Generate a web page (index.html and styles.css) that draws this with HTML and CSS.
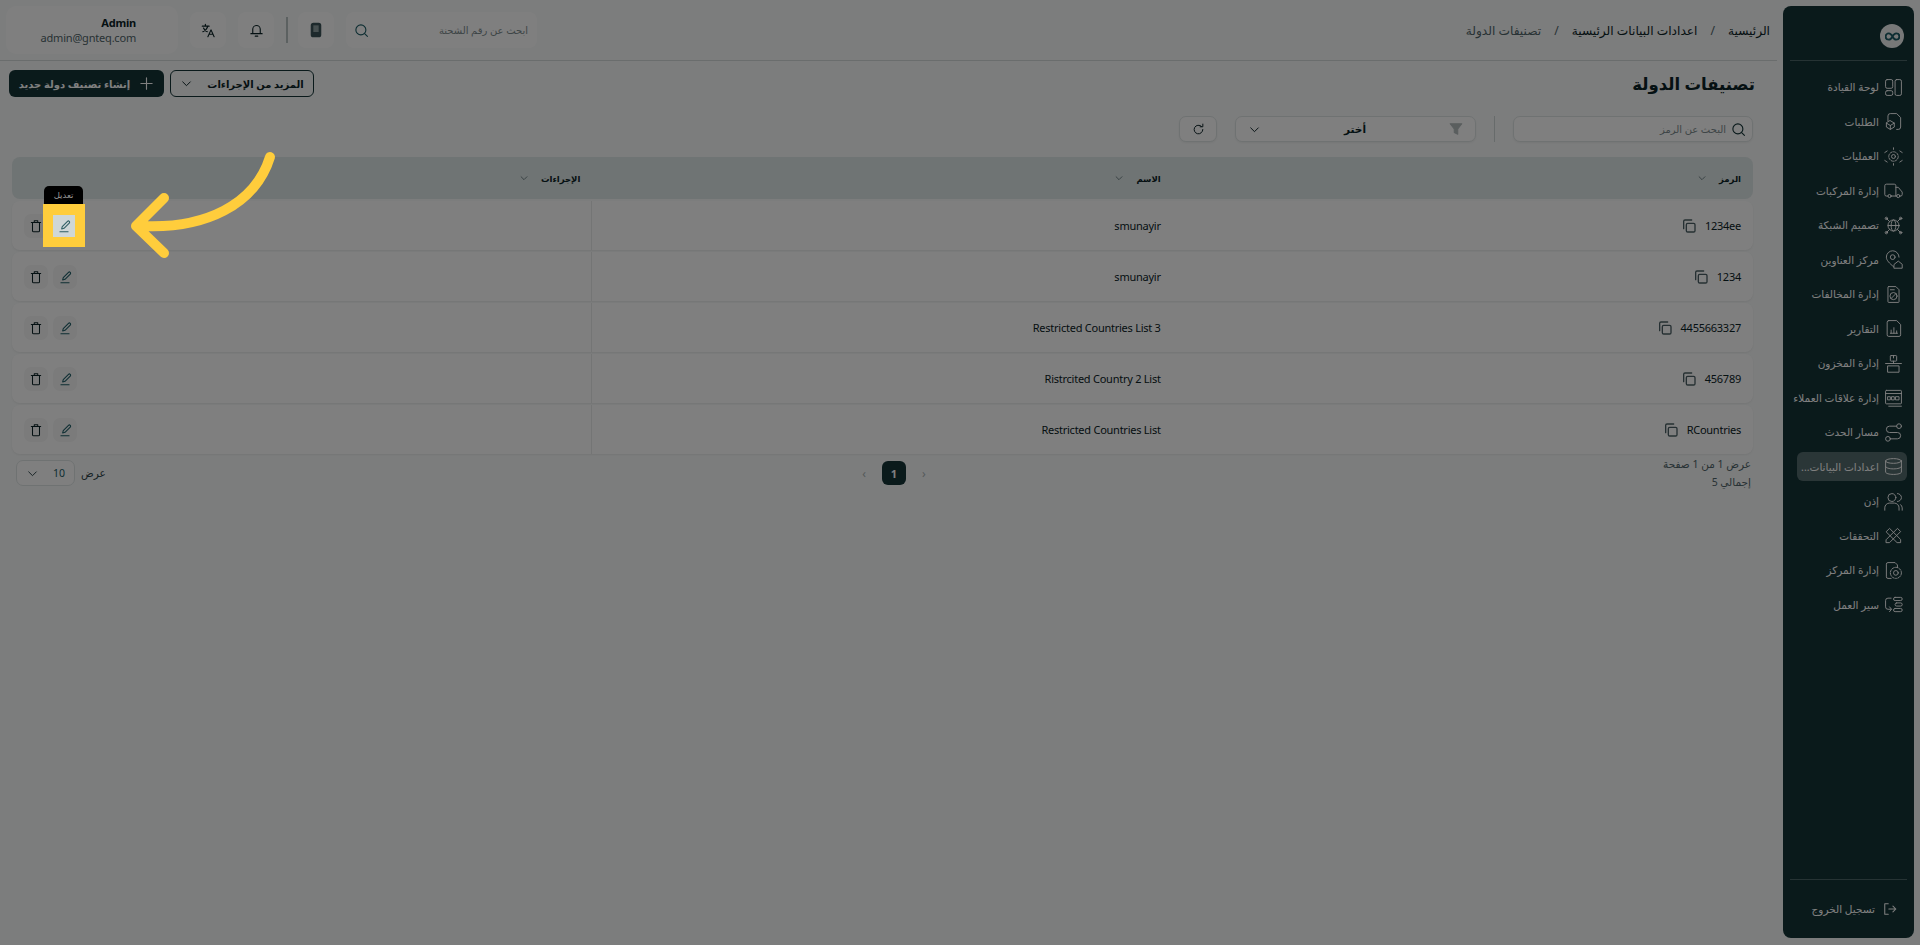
FILE: index.html
```html
<!DOCTYPE html>
<html lang="ar" dir="rtl">
<head>
  <meta charset="UTF-8">
  <meta name="viewport" content="width=device-width, initial-scale=1.0">
  <title>تصنيفات الدولة</title>
  <link rel="stylesheet" href="styles.css">
</head>
<body>
  <svg class="sprite" xmlns="http://www.w3.org/2000/svg">
    <symbol id="i-search" viewBox="0 0 24 24"><circle cx="11" cy="11" r="8"/><path d="M17 17l4.500 4.500"/></symbol>
    <symbol id="i-copy" viewBox="0 0 24 24"><rect x="8" y="8" width="13" height="13" rx="2"/><path d="M4 16V5a2 2 0 0 1 2-2h10"/></symbol>
    <symbol id="i-chev" viewBox="0 0 24 24"><path d="M5 9l7 7 7-7"/></symbol>
    <symbol id="i-edit" viewBox="0 0 24 24"><path d="M8 17l1-4 9-9a2.100 2.100 0 0 1 3 3l-9 9z"/><path d="M5 22h14"/></symbol>
    <symbol id="i-trash" viewBox="0 0 24 24"><path d="M4 6h16M9 6V3h6v3M6 6v14a2 2 0 0 0 2 2h8a2 2 0 0 0 2-2V6"/></symbol>
  </svg>

  <div class="shell">
    <aside class="sidebar">
      <div class="logo-row">
        <div class="logo">
          <svg viewBox="0 0 24 14" width="15" height="9"><path d="M12 7C10 3 8 2 6 2a5 5 0 0 0 0 10c2 0 4-1 6-5s4-5 6-5a5 5 0 0 1 0 10c-2 0-4-1-6-5z"/></svg>
        </div>
      </div>
      <nav class="side-nav">
        <a class="side-link" href="#"><svg viewBox="0 0 24 24"><rect x="2" y="2" width="9" height="11" rx="2"/><rect x="2" y="16" width="9" height="6" rx="2"/><rect x="14" y="2" width="8" height="20" rx="2"/></svg><span>لوحة القيادة</span></a>
        <a class="side-link" href="#"><svg viewBox="0 0 24 24"><path d="M5 11V5a3 3 0 0 1 3-3h8l5 5v12a3 3 0 0 1-3 3h-2"/><path d="M8 11l5 3v5l-5 3-5-3v-5zM3 14l5 3 5-3M8 17v5"/></svg><span>الطلبات</span></a>
        <a class="side-link" href="#"><svg viewBox="0 0 24 24"><circle cx="12" cy="12" r="2.500"/><circle cx="12" cy="12" r="6" stroke-dasharray="3 1.500"/><path d="M1 7l3-2M23 7l-3-2M1 17l3 2M23 17l-3 2M12 1v2M12 21v2"/></svg><span>العمليات</span></a>
        <a class="side-link" href="#"><svg viewBox="0 0 24 24"><path d="M5 19H3a2 2 0 0 1-2-2V6a2 2 0 0 1 2-2h10a2 2 0 0 1 2 2v13H9M15 8h3l5 6v3a2 2 0 0 1-2 2h-1M15 19h1"/><circle cx="7" cy="19" r="2"/><circle cx="18" cy="19" r="2"/></svg><span>إدارة المركبات</span></a>
        <a class="side-link" href="#"><svg viewBox="0 0 24 24"><circle cx="12" cy="12" r="7"/><ellipse cx="12" cy="12" rx="3" ry="7"/><path d="M5 12h14M3 3l4 4M21 3l-4 4M3 21l4-4M21 21l-4-4"/><circle cx="3" cy="3" r="1.500"/><circle cx="21" cy="3" r="1.500"/><circle cx="3" cy="21" r="1.500"/><circle cx="21" cy="21" r="1.500"/></svg><span>تصميم الشبكة</span></a>
        <a class="side-link" href="#"><svg viewBox="0 0 24 24"><path d="M12 21C7 17 3 13 3 9a8 8 0 0 1 16 0"/><circle cx="11" cy="9" r="3"/><path d="M13 18l5-4 5 4v5H13z"/></svg><span>مركز العناوين</span></a>
        <a class="side-link" href="#"><svg viewBox="0 0 24 24"><path d="M6 2h9l4 4v15a1 1 0 0 1-1 1H6a1 1 0 0 1-1-1V3a1 1 0 0 1 1-1z"/><circle cx="12" cy="14" r="4.500"/><path d="M9 17l6-6M8 6h5"/></svg><span>إدارة المخالفات</span></a>
        <a class="side-link" href="#"><svg viewBox="0 0 24 24"><path d="M6 2h10l5 5v13a2 2 0 0 1-2 2H6a2 2 0 0 1-2-2V4a2 2 0 0 1 2-2z"/><path d="M8 18h9M9 18v-4M12.500 18v-7M16 18v-3"/></svg><span>التقارير</span></a>
        <a class="side-link" href="#"><svg viewBox="0 0 24 24"><rect x="8" y="2" width="8" height="7" rx="1"/><path d="M12 2v3M2 12h20M5 15h14v8H5zM12 9v3"/></svg><span>إدارة المخزون</span></a>
        <a class="side-link" href="#"><svg viewBox="0 0 24 24"><rect x="2" y="3" width="20" height="17" rx="1"/><path d="M2 7h20M6 23h16"/><path d="M5 11h3v4H5zM10 11h3v4h-3zM15 11h4v4h-4z"/></svg><span>إدارة علاقات العملاء</span></a>
        <a class="side-link" href="#"><svg viewBox="0 0 24 24"><circle cx="19" cy="4" r="3"/><circle cx="5" cy="20" r="3"/><path d="M16 4H7a4 4 0 0 0 0 8h10a4 4 0 0 1 0 8H8"/></svg><span>مسار الحدث</span></a>
        <a class="side-link active" href="#"><svg viewBox="0 0 24 24"><ellipse cx="12" cy="5" rx="10" ry="3"/><path d="M2 5v14c0 1.700 4.500 3 10 3s10-1.300 10-3V5M2 12c0 1.700 4.500 3 10 3s10-1.300 10-3"/></svg><span>اعدادات البيانات...</span></a>
        <a class="side-link" href="#"><svg viewBox="0 0 24 24"><circle cx="10" cy="7" r="5"/><path d="M1 23v-3a6 6 0 0 1 6-6h6a6 6 0 0 1 6 6v3M17 2a5 5 0 0 1 0 10M23 23v-3a6 6 0 0 0-2-4"/></svg><span>إذن</span></a>
        <a class="side-link" href="#"><svg viewBox="0 0 24 24"><path d="M3 17L17 3l4 4L7 21H3z"/><path d="M3 7l4-4 14 14v4h-4z"/></svg><span>التحققات</span></a>
        <a class="side-link" href="#"><svg viewBox="0 0 24 24"><path d="M9 22H5a2 2 0 0 1-2-2V4a2 2 0 0 1 2-2h9l3 3v3"/><circle cx="15" cy="15" r="3"/><circle cx="15" cy="15" r="7" stroke-dasharray="3 1.500"/></svg><span>إدارة المركز</span></a>
        <a class="side-link" href="#"><svg viewBox="0 0 24 24"><rect x="12" y="3" width="11" height="4" rx="2"/><rect x="14" y="10" width="9" height="4" rx="2"/><rect x="12" y="17" width="11" height="4" rx="2"/><path d="M9 4H5a3 3 0 0 0-3 3v8a3 3 0 0 0 3 3h4M7 15l2.500 3L7 21"/></svg><span>سير العمل</span></a>
      </nav>
      <a class="logout" href="#">
        <svg viewBox="0 0 24 24"><path d="M9 3H3v18h6M10 12h12M17 7l5 5-5 5"/></svg>
        <span>تسجيل الخروج</span>
      </a>
    </aside>

    <main class="main">
      <header class="topbar">
        <div class="crumbs">
          <a href="#">الرئيسية</a><span class="sep">/</span>
          <a href="#">اعدادات البيانات الرئيسية</a><span class="sep">/</span>
          <span class="current">تصنيفات الدولة</span>
        </div>
        <div class="top-tools">
          <div class="top-search">
            <span>ابحث عن رقم الشحنة</span>
            <svg class="ico teal"><use href="#i-search"/></svg>
          </div>
          <button class="tool-btn"><svg viewBox="0 0 24 24" class="ico phone"><rect x="5" y="2" width="14" height="20" rx="3"/><rect class="phone-screen" x="8" y="5" width="8" height="10"/></svg></button>
          <div class="tool-sep"></div>
          <button class="tool-btn"><svg viewBox="0 0 24 24" class="ico"><path d="M6 17V10a6 6 0 0 1 12 0v7M3 17h18M10 21h4"/></svg></button>
          <button class="tool-btn"><svg viewBox="0 0 24 24" class="ico"><path d="M2 5h11M7 2v3M11 5c-1 4-4 7-8 9M4 8c1 3 4 5 6 6M11 22l5-11 5 11M13 18h6"/></svg></button>
          <div class="user-box">
            <div class="user-name">Admin</div>
            <div class="user-mail">admin@gnteq.com</div>
          </div>
        </div>
      </header>

      <div class="title-row">
        <h1>تصنيفات الدولة</h1>
        <div class="title-actions">
          <button class="btn-outline"><span>المزيد من الإجراءات</span><svg class="ico small"><use href="#i-chev"/></svg></button>
          <button class="btn-primary"><svg viewBox="0 0 24 24" class="ico"><path d="M12 3v18M3 12h18"/></svg><span>إنشاء تصنيف دولة جديد</span></button>
        </div>
      </div>

      <div class="content">
        <div class="filters">
          <div class="filter-search">
            <svg class="ico"><use href="#i-search"/></svg>
            <span>البحث عن الرمز</span>
          </div>
          <div class="filter-sep"></div>
          <div class="filter-select">
            <svg viewBox="0 0 24 24" class="funnel"><path d="M2 3h20l-7 9v9l-6-3v-6z"/></svg>
            <span>أختر</span>
            <svg class="ico small"><use href="#i-chev"/></svg>
          </div>
          <button class="refresh"><svg viewBox="0 0 24 24" class="ico small"><path d="M20 12a8 8 0 1 1-2.500-5.800M20 2v5h-5"/></svg></button>
        </div>

        <div class="table">
          <div class="thead">
            <div class="th"><span>الرمز</span><svg class="mini"><use href="#i-chev"/></svg></div>
            <div class="th"><span>الاسم</span><svg class="mini"><use href="#i-chev"/></svg></div>
            <div class="th"><span>الإجراءات</span><svg class="mini"><use href="#i-chev"/></svg></div>
          </div>

          <div class="tr">
            <div class="td"><span>1234ee</span><svg class="copy"><use href="#i-copy"/></svg></div>
            <div class="td">smunayir</div>
            <div class="td td-actions">
              <button class="act"><svg class="act-ico"><use href="#i-edit"/></svg></button>
              <button class="act"><svg class="act-ico"><use href="#i-trash"/></svg></button>
            </div>
          </div>
          <div class="tr">
            <div class="td"><span>1234</span><svg class="copy"><use href="#i-copy"/></svg></div>
            <div class="td">smunayir</div>
            <div class="td td-actions">
              <button class="act"><svg class="act-ico"><use href="#i-edit"/></svg></button>
              <button class="act"><svg class="act-ico"><use href="#i-trash"/></svg></button>
            </div>
          </div>
          <div class="tr">
            <div class="td"><span>4455663327</span><svg class="copy"><use href="#i-copy"/></svg></div>
            <div class="td"><bdi>Restricted Countries List 3</bdi></div>
            <div class="td td-actions">
              <button class="act"><svg class="act-ico"><use href="#i-edit"/></svg></button>
              <button class="act"><svg class="act-ico"><use href="#i-trash"/></svg></button>
            </div>
          </div>
          <div class="tr">
            <div class="td"><span>456789</span><svg class="copy"><use href="#i-copy"/></svg></div>
            <div class="td"><bdi>Ristrcited Country 2 List</bdi></div>
            <div class="td td-actions">
              <button class="act"><svg class="act-ico"><use href="#i-edit"/></svg></button>
              <button class="act"><svg class="act-ico"><use href="#i-trash"/></svg></button>
            </div>
          </div>
          <div class="tr">
            <div class="td"><span>RCountries</span><svg class="copy"><use href="#i-copy"/></svg></div>
            <div class="td"><bdi>Restricted Countries List</bdi></div>
            <div class="td td-actions">
              <button class="act"><svg class="act-ico"><use href="#i-edit"/></svg></button>
              <button class="act"><svg class="act-ico"><use href="#i-trash"/></svg></button>
            </div>
          </div>
        </div>

        <div class="table-foot">
          <div class="page-info">
            <div>عرض 1 من 1 صفحة</div>
            <div>إجمالي 5</div>
          </div>
          <div class="pager">
            <span class="pager-arrow">&#x2039;</span>
            <span class="pager-num">1</span>
            <span class="pager-arrow">&#x203A;</span>
          </div>
          <div class="page-size">
            <span>عرض</span>
            <div class="size-select"><span class="size-val">10</span><svg class="ico small"><use href="#i-chev"/></svg></div>
          </div>
        </div>
      </div>
    </main>
  </div>

  <!-- guide layer: dims the page, then spotlights the edit button -->
  <div class="dim"></div>
  <div class="spot">
    <div class="spot-tip">تعديل</div>
    <div class="spot-box"><span class="spot-btn"><svg class="act-ico"><use href="#i-edit"/></svg></span></div>
  </div>
  <svg class="arrow" viewBox="0 0 300 300" width="300" height="300">
    <path d="M270 157C255 205 205 229 142 226M164 198l-28 28 28 27"/>
  </svg>
</body>
</html>
```

FILE: styles.css
```css
* {
  box-sizing: border-box;
}

html, body {
  height: 100%;
}

body {
  margin: 0;
  font-family: "Noto Sans", "DejaVu Sans", sans-serif;
  font-size: 12px;
  color: #0b2226;
  background: #f8fafa;
  overflow: hidden;
}

a {
  color: inherit;
  text-decoration: none;
}

button {
  font: inherit;
  color: inherit;
  cursor: pointer;
}

.sprite {
  display: none;
}

/* icons */
svg {
  fill: none;
  stroke: currentColor;
  stroke-width: 1.8;
  stroke-linecap: round;
  stroke-linejoin: round;
  flex: none;
}

.ico {
  width: 15px;
  height: 15px;
}

.ico.small {
  width: 13px;
  height: 13px;
}

.ico.teal {
  color: #1d5d66;
}

.ico.phone {
  width: 16px;
  height: 16px;
  color: #3a5358;
  fill: #3a5358;
}

.phone-screen {
  fill: #8fa0a2;
  stroke: none;
}

.mini {
  width: 10px;
  height: 10px;
  color: #51656a;
}

.copy {
  width: 16px;
  height: 16px;
  stroke-width: 2;
  color: #4d6166;
}

.act-ico {
  width: 14px;
  height: 14px;
}

/* layout */
.shell {
  display: flex;
  gap: 6px;
  height: 100%;
  padding: 6px 6px 7px 0;
}

.main {
  flex: 1;
  margin-top: -6px;
  min-width: 0;
}

/* sidebar */
.sidebar {
  width: 131px;
  display: flex;
  flex-direction: column;
  background: #143437;
  border-radius: 8px;
  color: #fff;
}

.logo-row {
  height: 55px;
  margin: 0 7px;
  padding: 18px 3px 0 0;
  border-bottom: 1px solid #4d6669;
}

.logo {
  width: 24px;
  height: 24px;
  border-radius: 50%;
  background: #eef1f1;
  display: flex;
  align-items: center;
  justify-content: center;
  color: #1d5d66;
}

.logo svg {
  stroke-width: 3;
}

.side-nav {
  display: flex;
  flex-direction: column;
  gap: 5.5px;
  padding: 11.500px 7px 0 14px;
}

.side-link {
  height: 29px;
  display: flex;
  align-items: center;
  gap: 5px;
  padding-right: 4px;
  border-radius: 6px;
  font-size: 10.5px;
  white-space: nowrap;
}

.side-link svg {
  width: 19px;
  height: 19px;
  stroke-width: 1.2;
}

.side-link.active {
  background: rgba(255, 255, 255, 0.28);
}

.logout {
  margin: auto 7px 0;
  height: 59px;
  display: flex;
  align-items: center;
  gap: 8px;
  padding-right: 10px;
  border-top: 1px solid #4d6669;
  font-size: 10.5px;
}

.logout svg {
  width: 14px;
  height: 14px;
}

/* top bar */
.topbar {
  height: 61px;
  display: flex;
  align-items: center;
  justify-content: space-between;
  padding: 0 7px 0 6px;
  border-bottom: 1px solid #d5dada;
}

.crumbs {
  display: flex;
  align-items: center;
  font-size: 12.2px;
}

.crumbs .sep {
  margin: 0 13px;
  color: #51656a;
}

.crumbs .current {
  color: #51656a;
}

.top-tools {
  display: flex;
  align-items: center;
  gap: 12px;
}

.top-search {
  width: 191px;
  height: 36px;
  display: flex;
  align-items: center;
  justify-content: space-between;
  padding: 0 9px 0 8px;
  background: #fff;
  border-radius: 8px;
  color: #7d8b8e;
  font-size: 10px;
}

.tool-btn {
  width: 36px;
  height: 36px;
  display: flex;
  align-items: center;
  justify-content: center;
  padding: 0;
  border: 0;
  border-radius: 8px;
  background: #fff;
}

.tool-sep {
  width: 2px;
  height: 26px;
  margin-right: -2px;
  background: #b9c2c2;
}

.user-box {
  width: 172px;
  height: 48px;
  display: flex;
  flex-direction: column;
  justify-content: center;
  padding: 0 42px 0 0;
  background: #fff;
  border-radius: 10px;
  direction: ltr;
  text-align: right;
}

.user-name {
  font-weight: 700;
  font-size: 11px;
  letter-spacing: -0.2px;
}

.user-mail {
  color: #51656a;
  font-size: 11px;
  letter-spacing: -0.2px;
}

/* title */
.title-row {
  display: flex;
  align-items: center;
  justify-content: space-between;
  padding: 9px 22px 0 9px;
}

h1 {
  margin: 0;
  font-size: 16.5px;
  line-height: 25px;
  font-weight: 700;
}

.title-actions {
  display: flex;
  gap: 6px;
}

.btn-outline,
.btn-primary {
  height: 27px;
  display: flex;
  align-items: center;
  justify-content: center;
  border-radius: 6px;
  font-size: 10px;
  font-weight: 700;
  white-space: nowrap;
}

.btn-outline {
  width: 144px;
  gap: 14px;
  background: transparent;
  border: 1px solid #143437;
}

.btn-primary {
  width: 155px;
  gap: 9px;
  background: #143437;
  border: 0;
  color: #fff;
}

/* filters */
.content {
  padding: 19px 24px 0 12px;
}

.filters {
  display: flex;
  align-items: center;
  height: 26px;
}

.filter-search,
.filter-select,
.refresh {
  height: 26px;
  background: #fff;
  border: 1px solid #dfe5e5;
  border-radius: 7px;
  box-shadow: 0 1px 2px rgba(0, 0, 0, 0.05);
}

.filter-search {
  width: 240px;
  display: flex;
  align-items: center;
  gap: 5px;
  padding-right: 6px;
  color: #7d8b8e;
  font-size: 10px;
}

.filter-search svg {
  color: #143437;
}

.filter-sep {
  width: 1px;
  height: 26px;
  margin: 0 18px;
  background: #cfd6d6;
}

.filter-select {
  width: 241px;
  display: flex;
  align-items: center;
  justify-content: space-between;
  padding: 0 12px;
  font-weight: 700;
  font-size: 10.5px;
}

.funnel {
  width: 14px;
  height: 14px;
  fill: #b4bcbd;
  stroke: #b4bcbd;
}

.refresh {
  width: 38px;
  margin-right: 18px;
  display: flex;
  align-items: center;
  justify-content: center;
  padding: 0;
}

/* table */
.table {
  margin-top: 15px;
  display: flex;
  flex-direction: column;
  gap: 2px;
}

.thead,
.tr {
  display: grid;
  grid-template-columns: 1fr 1fr 1fr;
}

.thead {
  height: 42px;
  background: #dfe8e8;
  border-radius: 8px;
}

.th {
  display: flex;
  align-items: center;
  gap: 12px;
  padding: 0 12px;
  font-size: 8.5px;
  font-weight: 700;
}

.tr {
  height: 49px;
  background: #fff;
  border-radius: 8px;
  box-shadow: 0 1px 2px rgba(0, 0, 0, 0.06);
}

.td {
  display: flex;
  align-items: center;
  gap: 8px;
  padding: 0 12px;
  font-size: 11px;
  letter-spacing: -0.25px;
}

.td-actions {
  justify-content: flex-start;
  flex-direction: row-reverse;
  gap: 5px;
  padding: 0 12px;
  border-right: 1px solid #e8eaea;
}

.act {
  width: 24px;
  height: 24px;
  display: flex;
  align-items: center;
  justify-content: center;
  padding: 0;
  border: 0;
  border-radius: 7px;
  background: #f6f7f7;
}

.td-actions .act:first-child {
  order: 2;
  color: #1d5d66;
}

/* table footer */
.table-foot {
  display: flex;
  justify-content: space-between;
  align-items: center;
  padding: 0 2px 0 4px;
  height: 38px;
}

.page-info {
  color: #51656a;
  font-size: 10.5px;
  line-height: 18px;
}

.pager {
  display: flex;
  align-items: center;
  gap: 16px;
  color: #a9b3b4;
  margin-left: 19px;
}

.pager-num {
  width: 24px;
  height: 24px;
  display: flex;
  align-items: center;
  justify-content: center;
  background: #143437;
  color: #fff;
  border-radius: 6px;
  font-weight: 700;
  font-size: 11px;
}

.page-size {
  display: flex;
  align-items: center;
  gap: 6px;
  font-size: 10.5px;
  color: #2c4449;
}

.size-select {
  width: 59px;
  height: 26px;
  display: flex;
  align-items: center;
  justify-content: space-between;
  padding: 0 9px;
  background: #fff;
  border: 1px solid #dfe5e5;
  border-radius: 7px;
}

.size-val {
  color: #1d5d66;
}

/* guide layer */
.dim {
  position: fixed;
  inset: 0;
  background: rgba(0, 0, 0, 0.5);
}

.spot {
  position: absolute;
  left: 43px;
  top: 186px;
  width: 42px;
}

.spot-tip {
  width: 39px;
  height: 18px;
  margin-right: 2px;
  background: #000;
  color: #9a9a9a;
  border-radius: 5px 5px 0 0;
  font-size: 8.5px;
  line-height: 18px;
  text-align: center;
}

.spot-box {
  height: 43px;
  background: #ffcd3c;
  display: flex;
  align-items: center;
  justify-content: center;
}

.spot-btn {
  width: 22px;
  height: 22px;
  display: flex;
  align-items: center;
  justify-content: center;
  background: #cfd7d7;
  color: #2f5e63;
}

.arrow {
  position: absolute;
  left: 0;
  top: 0;
  stroke: #ffcd3c;
  stroke-width: 10;
}
```
